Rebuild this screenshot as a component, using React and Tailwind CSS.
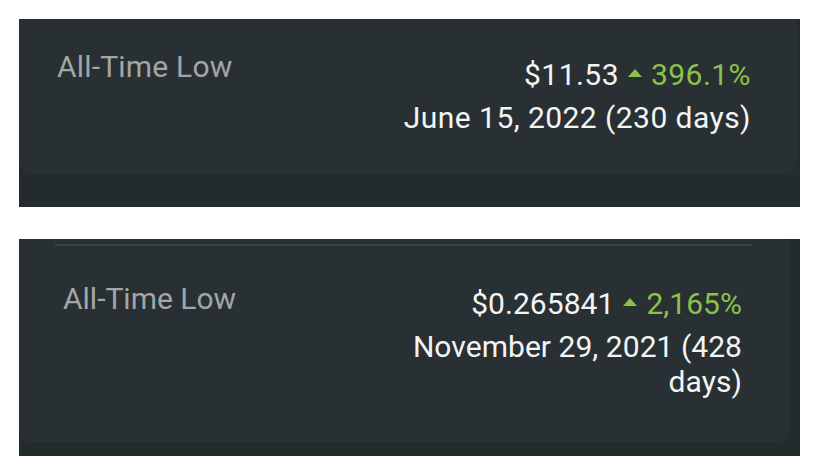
const UpArrow = () => (
  <svg width="14" height="8" viewBox="0 0 14 8" className="mx-[9px] mb-[5px] shrink-0">
    <path d="M0 8 L7 0 L14 8 Z" fill="#8bc34a" />
  </svg>
);

/* One "All-Time Low" row: label on the left, price + change + date on the right */
const LowRow = ({ price, change, date, labelClass, valueClass }) => (
  <div className="flex items-start justify-between">
    <span className={`text-[30px] leading-[36px] text-[#a2a6a6] whitespace-nowrap ${labelClass}`}>All-Time Low</span>
    <div className={`flex flex-col items-end text-right ${valueClass}`}>
      <div className="flex items-center text-[30px] leading-[36px] mb-[7px] whitespace-nowrap">
        <span className="text-[#f3f4f4]">{price}</span>
        <UpArrow />
        <span className="text-[#8bc34a]">{change}</span>
      </div>
      <div className="text-[30px] leading-[35px] text-[#f3f4f4]">{date}</div>
    </div>
  </div>
);

export default function App() {
  return (
    <div
      className="w-[816px] h-[466px] bg-white pt-[19px] pl-[19px] pr-[16px] flex flex-col gap-[32px]"
      style={{ fontFamily: "Roboto, 'Liberation Sans', sans-serif" }}
    >
      {/* first panel */}
      <div className="h-[188px] bg-[#232b2c] pr-[3px]">
        <div className="h-[155px] bg-[#283033] rounded-b-[12px] pl-[38px] pr-[46px] pt-[30px]">
          <LowRow
            price="$11.53"
            change="396.1%"
            date="June 15, 2022 (230 days)"
            labelClass="tracking-[0.2px]"
            valueClass="mt-[8px] whitespace-nowrap tracking-[0.45px]"
          />
        </div>
      </div>

      {/* second panel */}
      <div className="h-[217px] bg-[#232b2c] pr-[11px]">
        <div className="h-[203px] bg-[#283033] rounded-b-[12px] pt-[5px]">
          <div className="h-[2px] bg-[#3a4347] ml-[36px] mr-[37px]" />
          <div className="pl-[44px] pr-[47px] pt-[35px]">
            <LowRow
              price="$0.265841"
              change="2,165%"
              date="November 29, 2021 (428 days)"
              labelClass="tracking-[0px]"
              valueClass="mt-[5px] max-w-[340px] tracking-[0.05px]"
            />
          </div>
        </div>
      </div>
    </div>
  );
}
